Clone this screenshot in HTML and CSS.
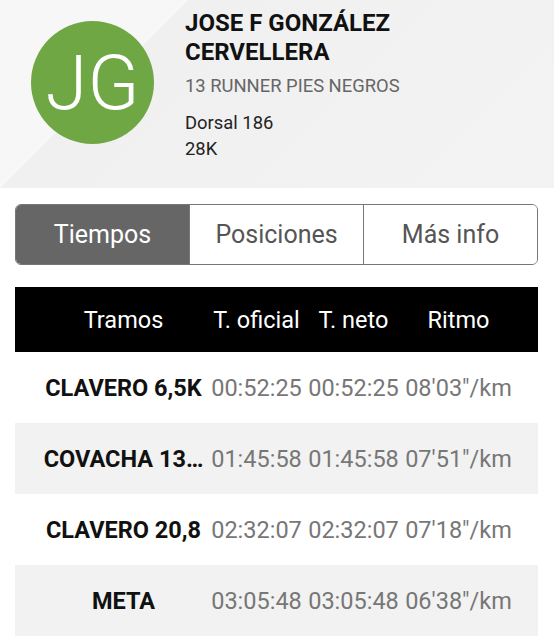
FILE: index.html
```html
<!DOCTYPE html>
<html lang="es">
<head>
    <meta charset="UTF-8">
    <meta name="viewport" content="width=device-width, initial-scale=1.0">
    <title>Tiempos - Jose F González Cervellera</title>
    <link rel="stylesheet" href="styles.css">
</head>
<body>
    <div id="perfil">
        <div class="avatar">JG</div>
        <div class="datos">
            <h1>JOSE F GONZÁLEZ CERVELLERA</h1>
            <div class="club">13 RUNNER PIES NEGROS</div>
            <div class="info">
                <div>Dorsal 186</div>
                <div>28K</div>
            </div>
        </div>
    </div>

    <div class="tabs">
        <button class="activo">Tiempos</button>
        <button>Posiciones</button>
        <button>Más info</button>
    </div>

    <div id="tabla">
        <div class="fila cabecera">
            <span>Tramos</span>
            <span>T. oficial</span>
            <span>T. neto</span>
            <span>Ritmo</span>
        </div>
        <div class="fila">
            <span class="tramo">CLAVERO 6,5K</span>
            <span>00:52:25</span>
            <span>00:52:25</span>
            <span>08'03"/km</span>
        </div>
        <div class="fila par">
            <span class="tramo">COVACHA 13…</span>
            <span>01:45:58</span>
            <span>01:45:58</span>
            <span>07'51"/km</span>
        </div>
        <div class="fila">
            <span class="tramo">CLAVERO 20,8</span>
            <span>02:32:07</span>
            <span>02:32:07</span>
            <span>07'18"/km</span>
        </div>
        <div class="fila par">
            <span class="tramo">META</span>
            <span>03:05:48</span>
            <span>03:05:48</span>
            <span>06'38"/km</span>
        </div>
    </div>
</body>
</html>
```

FILE: styles.css
```css
/* Estilos base */
body {
    font-family: Roboto, "Noto Sans", sans-serif;
    margin: 0;
    padding: 0;
    background-color: #fff;
    color: #111;
}

#perfil {
    display: flex;
    align-items: flex-start;
    height: 188px;
    box-sizing: border-box;
    padding: 9px 0 0 31px;
    background: linear-gradient(135deg, #f7f7f7 133px, #f0f0f0 133px, #f3f3f3 100%);
}

.avatar {
    flex: none;
    width: 123px;
    height: 123px;
    margin-top: 12px;
    border-radius: 50%;
    background-color: #6fa744;
    color: #fff;
    font-size: 76px;
    font-weight: 300;
    display: flex;
    align-items: center;
    justify-content: center;
}

.datos {
    margin-left: 31px;
}

h1 {
    margin: 0;
    width: 260px;
    font-size: 24px;
    line-height: 29px;
    font-weight: bold;
    color: #111;
}

.club {
    margin-top: 7px;
    font-size: 18.4px;
    line-height: 24px;
    color: #666;
}

.info {
    margin-top: 12px;
    font-size: 18.4px;
    line-height: 26px;
    color: #222;
}

.tabs {
    display: flex;
    margin: 16px 16px 0 15px;
    height: 59px;
    border: 1px solid #777;
    border-radius: 6px;
    overflow: hidden;
}

.tabs button {
    flex: 1;
    border: none;
    border-left: 1px solid #777;
    background-color: #fff;
    color: #555;
    font-family: inherit;
    font-size: 25px;
    padding: 0;
    cursor: pointer;
}

.tabs button:first-child {
    border-left: none;
}

.tabs button.activo {
    background-color: #666;
    color: #fff;
}

#tabla {
    margin: 22px 16px 0 15px;
}

.fila {
    display: grid;
    grid-template-columns: 169px 97px 97px 113px;
    align-items: center;
    height: 71px;
    padding: 0 23px 0 24px;
    font-size: 23.5px;
    color: #777;
    text-align: center;
}

.fila span {
    white-space: nowrap;
}

.fila.par {
    background-color: #f2f2f2;
}

.fila.cabecera {
    height: 65px;
    background-color: #000;
    color: #fff;
}

.tramo {
    font-weight: bold;
    color: #111;
}
```
